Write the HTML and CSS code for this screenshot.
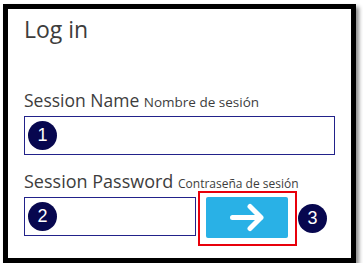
FILE: index.html
```html
<!DOCTYPE html>
<html lang="en">
<head>
    <meta charset="UTF-8">
    <meta name="viewport" content="width=device-width, initial-scale=1.0">
    <title>Log in</title>
    <link rel="stylesheet" href="styles.css">
</head>
<body>
    <div class="frame">
        <h1 class="title">Log in</h1>

        <label class="label label-name">Session Name <small>Nombre de sesión</small></label>
        <div class="field field-name">
            <span class="step">1</span>
        </div>

        <label class="label label-pass">Session Password <small>Contraseña de sesión</small></label>
        <div class="row">
            <div class="field field-pass">
                <span class="step">2</span>
            </div>
            <div class="highlight">
                <button class="go-btn" type="button">
                    <svg width="36" height="29" viewBox="0 0 36 29">
                        <path d="M3.5 14.5 H32 M21 3.5 L32 14.5 L21 25.5" fill="none" stroke="#fff" stroke-width="5" stroke-linecap="round" stroke-linejoin="round"/>
                    </svg>
                </button>
            </div>
            <span class="step step-go">3</span>
        </div>
    </div>
</body>
</html>
```

FILE: styles.css
```css
body {
    margin: 0;
    background-color: #fff;
    font-family: 'Open Sans', 'Noto Sans', sans-serif;
    color: #3d3d3d;
}

.frame {
    margin: 4px 0 0 3px;
    width: 311px;
    height: 249px;
    padding: 0 16px;
    border: 5px solid #000;
    box-shadow: 3px 3px 4px rgba(0, 0, 0, 0.45);
    background-color: #fff;
}

.title {
    margin: 0;
    padding-top: 4px;
    font-size: 23px;
    font-weight: 400;
    line-height: 32px;
}

.label {
    display: block;
    font-size: 17.5px;
    line-height: 20px;
    white-space: nowrap;
}

.label small {
    font-size: 12px;
    line-height: 1;
}

.label-name small {
    font-size: 13.5px;
}

.label-name {
    margin-top: 45px;
}

.label-pass {
    margin-top: 16px;
    font-size: 18px;
}

.field {
    box-sizing: border-box;
    height: 39px;
    border: 1px solid #22228a;
    display: flex;
    align-items: center;
    padding-left: 3px;
}

.field-name {
    width: 311px;
    margin-top: 6px;
}

.row {
    display: flex;
    align-items: flex-start;
}

.field-pass {
    width: 172px;
    margin-top: 6px;
}

.step {
    width: 29px;
    height: 29px;
    border-radius: 50%;
    background-color: #07074f;
    color: #fff;
    font-family: 'Liberation Sans', Arial, sans-serif;
    font-size: 18px;
    display: flex;
    align-items: center;
    justify-content: center;
}

.highlight {
    margin-left: 2px;
    width: 99px;
    height: 55px;
    box-sizing: border-box;
    border: 2px solid #e8000b;
    padding: 4px 0 0 6px;
}

.go-btn {
    width: 82px;
    height: 41px;
    border: none;
    border-radius: 2px;
    background-color: #29b1e6;
    padding: 0;
    display: flex;
    align-items: center;
    justify-content: center;
    cursor: pointer;
}

.step-go {
    align-self: center;
    margin-left: 1px;
}
```
